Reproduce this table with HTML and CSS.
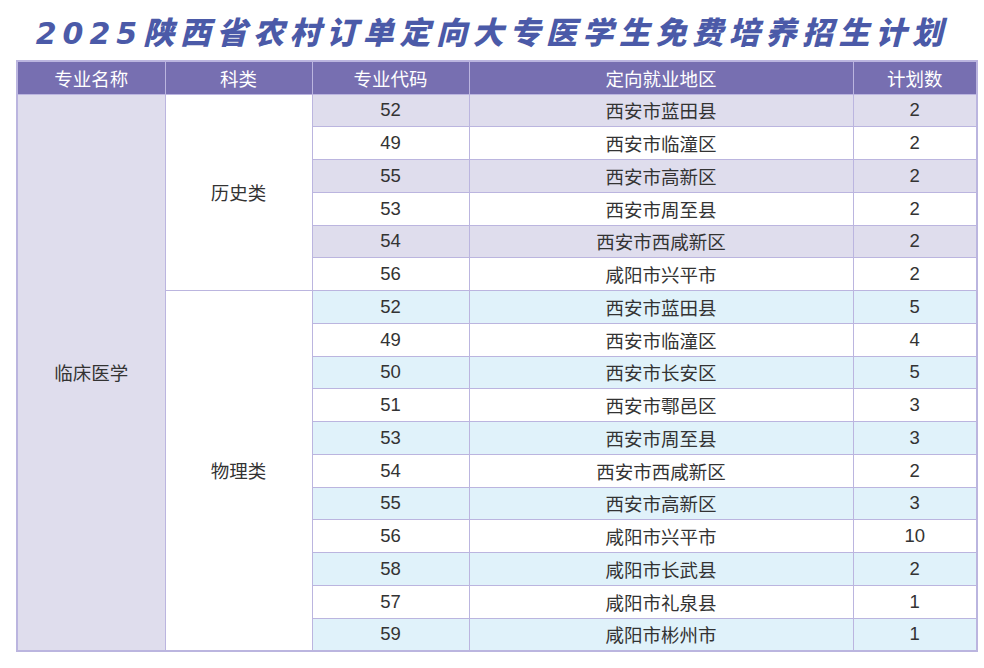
FILE: index.html
```html
<!DOCTYPE html>
<html lang="zh">
<head>
<meta charset="utf-8">
<link rel="stylesheet" href="styles.css">
</head>
<body>
<div class="page">
  <h1 class="title"><span class="num">2025</span>陕西省农村订单定向大专医学生免费培养招生计划</h1>
  <table class="plan">
    <colgroup>
      <col class="c1"><col class="c2"><col class="c3"><col class="c4"><col class="c5">
    </colgroup>
    <thead>
      <tr><th>专业名称</th><th>科类</th><th>专业代码</th><th>定向就业地区</th><th>计划数</th></tr>
    </thead>
    <tbody>
      <tr class="p"><td class="major" rowspan="17">临床医学</td><td class="cat" rowspan="6">历史类</td><td>52</td><td>西安市蓝田县</td><td>2</td></tr>
      <tr><td>49</td><td>西安市临潼区</td><td>2</td></tr>
      <tr class="p"><td>55</td><td>西安市高新区</td><td>2</td></tr>
      <tr><td>53</td><td>西安市周至县</td><td>2</td></tr>
      <tr class="p"><td>54</td><td>西安市西咸新区</td><td>2</td></tr>
      <tr><td>56</td><td>咸阳市兴平市</td><td>2</td></tr>
      <tr class="b"><td class="cat" rowspan="11">物理类</td><td>52</td><td>西安市蓝田县</td><td>5</td></tr>
      <tr><td>49</td><td>西安市临潼区</td><td>4</td></tr>
      <tr class="b"><td>50</td><td>西安市长安区</td><td>5</td></tr>
      <tr><td>51</td><td>西安市鄠邑区</td><td>3</td></tr>
      <tr class="b"><td>53</td><td>西安市周至县</td><td>3</td></tr>
      <tr><td>54</td><td>西安市西咸新区</td><td>2</td></tr>
      <tr class="b"><td>55</td><td>西安市高新区</td><td>3</td></tr>
      <tr><td>56</td><td>咸阳市兴平市</td><td>10</td></tr>
      <tr class="b"><td>58</td><td>咸阳市长武县</td><td>2</td></tr>
      <tr><td>57</td><td>咸阳市礼泉县</td><td>1</td></tr>
      <tr class="b"><td>59</td><td>咸阳市彬州市</td><td>1</td></tr>
    </tbody>
  </table>
</div>
</body>
</html>
```

FILE: styles.css
```css
html, body {
  margin: 0;
  padding: 0;
  background: #ffffff;
}

.page {
  width: 984px;
  height: 668px;
  display: flex;
  flex-direction: column;
  align-items: center;
}

.title {
  margin: 0;
  height: 60px;
  line-height: 62px;
  font-family: "Noto Sans CJK SC", sans-serif;
  font-weight: 900;
  font-style: italic;
  font-size: 31px;
  letter-spacing: 5.6px;
  color: #4b5aa8;
  white-space: nowrap;
}

.title .num {
  font-family: "DejaVu Sans", sans-serif;
  font-weight: bold;
  font-size: 30px;
  letter-spacing: 6px;
}

.plan {
  width: 961px;
  margin-left: 10px;
  table-layout: fixed;
  border-collapse: collapse;
  font-family: "Liberation Sans", "Noto Sans CJK SC", sans-serif;
  font-size: 18.5px;
  color: #333333;
  border: 2px solid #bbb5df;
}

.c1 { width: 148px; }
.c2 { width: 147px; }
.c3 { width: 157px; }
.c4 { width: 384px; }
.c5 { width: 124px; }

.plan th,
.plan td {
  border: 1.5px solid #bbb5df;
  padding: 0;
  text-align: center;
  vertical-align: middle;
  font-weight: normal;
  white-space: nowrap;
}

.plan thead tr {
  height: 33px;
}

.plan th {
  background: #776fb1;
  color: #ffffff;
}

.plan tbody tr {
  height: 32.76px;
}

.plan tr.p td {
  background: #dfdded;
}

.plan tr.b td {
  background: #e0f2fa;
}

.plan td.major,
.plan tr.p td.major {
  background: #dfdded;
}

.plan td.cat,
.plan tr.p td.cat,
.plan tr.b td.cat {
  background: #ffffff;
}
```
